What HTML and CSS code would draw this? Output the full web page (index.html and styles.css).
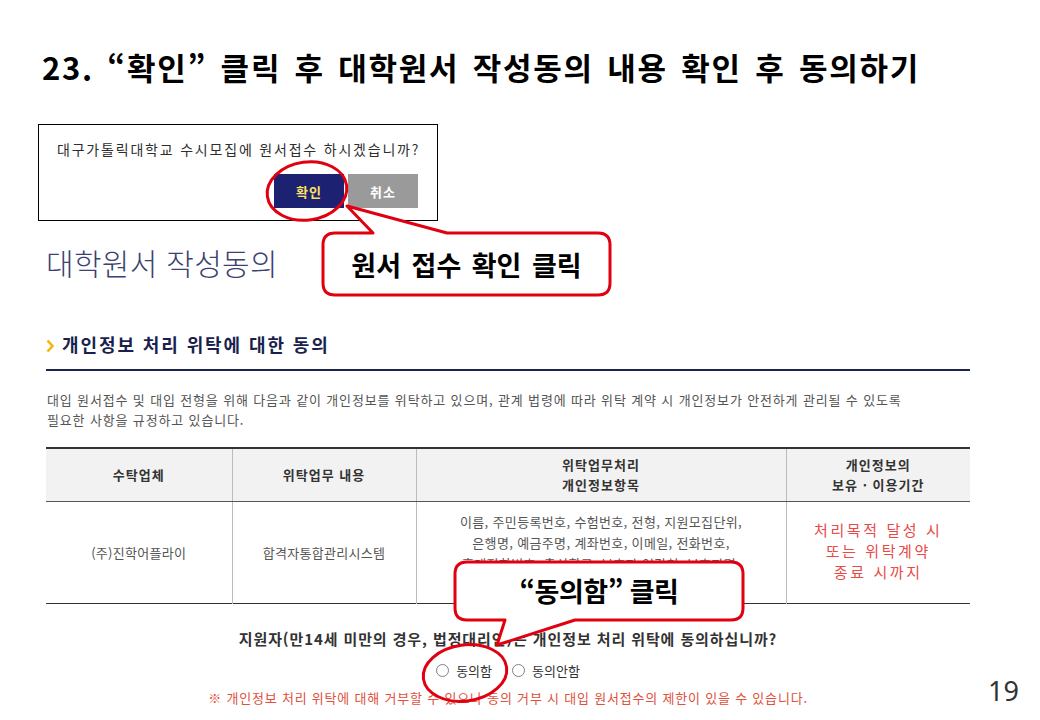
FILE: index.html
```html
<!DOCTYPE html>
<html lang="ko">
<head>
<meta charset="utf-8">
<title>대학원서 작성동의</title>
<link rel="stylesheet" href="styles.css">
</head>
<body>
<div class="slide">
  <div class="main">
    <h1 class="title">23. “확인” 클릭 후 대학원서 작성동의 내용 확인 후 동의하기</h1>

    <div class="dialog">
      <p class="dialog-msg">대구가톨릭대학교 수시모집에 원서접수 하시겠습니까?</p>
      <div class="dialog-btns">
        <button class="btn btn-ok">확인</button>
        <button class="btn btn-cancel">취소</button>
      </div>
    </div>

    <h2 class="page-heading">대학원서 작성동의</h2>

    <h3 class="section-title">
      <svg class="chev" width="8" height="14" viewBox="0 0 8 14"><polyline points="1.5,1.5 6.5,7 1.5,12.5" fill="none" stroke="#f2b705" stroke-width="2.6"/></svg>
      <span>개인정보 처리 위탁에 대한 동의</span>
    </h3>

    <p class="desc">대입 원서접수 및 대입 전형을 위해 다음과 같이 개인정보를 위탁하고 있으며, 관계 법령에 따라 위탁 계약 시 개인정보가 안전하게 관리될 수 있도록<br>필요한 사항을 규정하고 있습니다.</p>

    <table class="consent">
      <colgroup>
        <col class="c1"><col class="c2"><col class="c3"><col class="c4">
      </colgroup>
      <thead>
        <tr>
          <th>수탁업체</th>
          <th>위탁업무 내용</th>
          <th>위탁업무처리<br>개인정보항목</th>
          <th>개인정보의<br>보유 · 이용기간</th>
        </tr>
      </thead>
      <tbody>
        <tr>
          <td>(주)진학어플라이</td>
          <td>합격자통합관리시스템</td>
          <td class="items">이름, 주민등록번호, 수험번호, 전형, 지원모집단위,<br>은행명, 예금주명, 계좌번호, 이메일, 전화번호,<br>휴대전화번호, 출신학교, 보호자 연락처, 보호자명,</td>
          <td class="period">처리목적 달성 시<br>또는 위탁계약<br>종료 시까지</td>
        </tr>
      </tbody>
    </table>

    <p class="question">지원자(만14세 미만의 경우, 법정대리인)는 개인정보 처리 위탁에 동의하십니까?</p>

    <div class="radios">
      <label class="radio"><input type="radio" name="agree"><span>동의함</span></label>
      <label class="radio"><input type="radio" name="agree"><span>동의안함</span></label>
    </div>

    <p class="note">※ 개인정보 처리 위탁에 대해 거부할 수 있으나 동의 거부 시 대입 원서접수의 제한이 있을 수 있습니다.</p>
  </div>

  <div class="gutter">
    <div class="page-no">19</div>
  </div>

  <svg class="annot" width="1040" height="720" viewBox="0 0 1040 720">
    <path d="M335 233 L373 233 L347 206 L447 233 L598 233 Q610 233 610 245 L610 283 Q610 295 598 295 L335 295 Q323 295 323 283 L323 245 Q323 233 335 233 Z" fill="#fff" stroke="#e00010" stroke-width="3" stroke-linejoin="round"/>
    <ellipse cx="307" cy="191" rx="40" ry="29" transform="rotate(-8 307 191)" fill="none" stroke="#e00010" stroke-width="3"/>
    <path d="M467 562 L731 562 Q743 562 743 574 L743 608 Q743 620 731 620 L575 620 L497 645 L505 620 L467 620 Q455 620 455 608 L455 574 Q455 562 467 562 Z" fill="#fff" stroke="#e00010" stroke-width="3" stroke-linejoin="round"/>
    <ellipse cx="465" cy="673" rx="42" ry="28" transform="rotate(-8 465 673)" fill="none" stroke="#e00010" stroke-width="3"/>
  </svg>
  <div class="callout callout-1">원서 접수 확인 클릭</div>
  <div class="callout callout-2">“동의함” 클릭</div>
</div>
</body>
</html>
```

FILE: styles.css
```css
* { box-sizing: border-box; }
html, body { margin: 0; padding: 0; background: #fff; }
body { font-family: "Noto Sans CJK KR", "Noto Sans", sans-serif; }

.slide {
  position: relative;
  width: 1040px;
  height: 720px;
  overflow: hidden;
  display: flex;
}

.main {
  width: 924px;
  margin-left: 46px;
  display: flex;
  flex-direction: column;
  align-items: flex-start;
}

.gutter {
  flex: 1;
  display: flex;
  align-items: flex-end;
  justify-content: flex-start;
  padding: 0 0 14px 18px;
}
.page-no {
  font-family: "Noto Sans", sans-serif;
  font-size: 27px;
  line-height: 30px;
  color: #333;
}

.title {
  margin: 47px 0 0 -4px;
  font-size: 31px;
  line-height: 40px;
  font-weight: 700;
  color: #000;
  letter-spacing: 1.75px;
  word-spacing: 3px;
  white-space: nowrap;
}

.dialog {
  margin: 37px 0 0 -8px;
  width: 400px;
  border: 1px solid #000;
  padding: 14px 19px 12px 18px;
  display: flex;
  flex-direction: column;
}
.dialog-msg {
  margin: 0;
  font-size: 14px;
  line-height: 20px;
  color: #2e2e2e;
  letter-spacing: 1.8px;
  white-space: nowrap;
}
.dialog-btns {
  margin-top: 15px;
  display: flex;
  justify-content: flex-end;
  gap: 4px;
}
.btn {
  width: 70px;
  height: 34px;
  border: 0;
  padding: 0;
  font-family: inherit;
  font-size: 13px;
  font-weight: 700;
  letter-spacing: 1px;
}
.btn-ok { background: #1d2171; color: #ffe45c; }
.btn-cancel { background: #9a9a9a; color: #fff; }

.page-heading {
  margin: 21px 0 0 0;
  font-size: 30px;
  line-height: 40px;
  font-weight: 300;
  color: #3b4171;
  letter-spacing: 0.3px;
  white-space: nowrap;
}

.section-title {
  margin: 50px 0 0 0;
  width: 100%;
  padding-bottom: 13px;
  border-bottom: 2px solid #1e2452;
  display: flex;
  align-items: center;
  gap: 8px;
  font-size: 18px;
  line-height: 24px;
  font-weight: 700;
  color: #1a1f4e;
  letter-spacing: 1.9px;
}
.chev { margin-top: 3px; flex: none; }

.desc {
  margin: 19px 0 0 1px;
  font-size: 13px;
  line-height: 20px;
  color: #555;
  letter-spacing: 0.85px;
  white-space: nowrap;
}

.consent {
  margin-top: 17px;
  width: 924px;
  border-collapse: collapse;
  table-layout: fixed;
  border-top: 2px solid #333;
  border-bottom: 1px solid #333;
}
.consent .c1 { width: 186px; }
.consent .c2 { width: 184px; }
.consent .c3 { width: 370px; }
.consent .c4 { width: 184px; }
.consent th, .consent td {
  border-left: 1px solid #bbb;
  text-align: center;
  vertical-align: middle;
  padding: 0;
}
.consent th:first-child, .consent td:first-child { border-left: 0; }
.consent th {
  height: 53px;
  background: #f2f2f2;
  border-bottom: 1px solid #555;
  font-size: 13px;
  line-height: 20px;
  font-weight: 700;
  color: #333;
  letter-spacing: 1px;
}
.consent td {
  height: 102px;
  font-size: 13px;
  line-height: 21px;
  color: #555;
  letter-spacing: 0.3px;
}
.consent td.items {
  vertical-align: top;
  padding-top: 9px;
  letter-spacing: 0.35px;
}
.consent td.period {
  font-size: 15px;
  line-height: 21px;
  color: #e84a46;
  letter-spacing: 2.6px;
  padding-bottom: 4px;
}

.question {
  margin: 24px 0 0 0;
  align-self: center;
  font-size: 15px;
  line-height: 22px;
  font-weight: 700;
  color: #333;
  letter-spacing: 0.9px;
  white-space: nowrap;
}

.radios {
  margin-top: 10px;
  align-self: center;
  display: flex;
  gap: 20px;
}
.radio {
  display: flex;
  align-items: center;
  gap: 7px;
  font-size: 13px;
  line-height: 22px;
  color: #333;
}
.radio input {
  appearance: none;
  -webkit-appearance: none;
  margin: 0;
  width: 13px;
  height: 13px;
  border: 1px solid #808080;
  border-radius: 50%;
  background: #fff;
}

.note {
  margin: 6px 0 0 0;
  align-self: center;
  font-size: 13px;
  line-height: 20px;
  color: #e0503c;
  letter-spacing: 0.8px;
  white-space: nowrap;
}

.annot {
  position: absolute;
  left: 0;
  top: 0;
  pointer-events: none;
}
.callout {
  position: absolute;
  display: flex;
  align-items: center;
  justify-content: center;
  font-weight: 700;
  font-size: 27px;
  color: #000;
  letter-spacing: -0.5px;
  white-space: nowrap;
}
.callout-1 { left: 323px; top: 233px; width: 287px; height: 62px; letter-spacing: 0; word-spacing: 3px; }
.callout-2 { left: 455px; top: 562px; width: 288px; height: 58px; padding-bottom: 2px; }
```
